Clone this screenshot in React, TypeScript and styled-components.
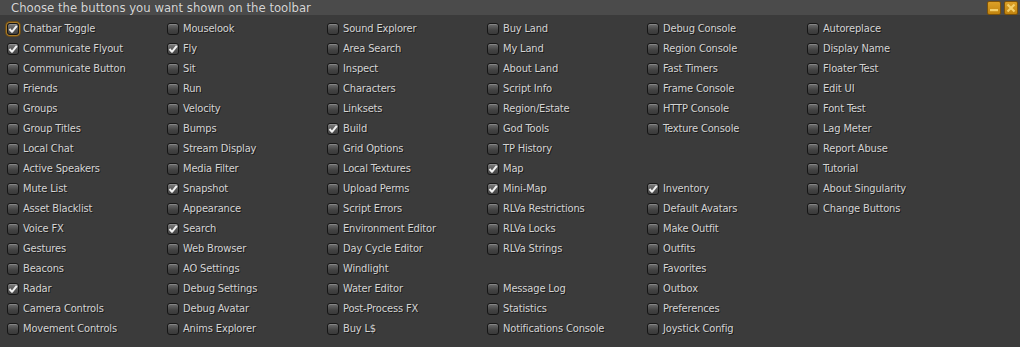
import React from "react";
import styled, { createGlobalStyle, css } from "styled-components";

const Global = createGlobalStyle`
  html, body { margin: 0; padding: 0; background: #3b3b3b; }
  body { width: 1020px; height: 347px; overflow: hidden; }
`;

const Floater = styled.div`
  width: 1020px;
  height: 347px;
  background: #3b3b3b;
  display: flex;
  flex-direction: column;
  font-family: "DejaVu Sans Condensed", "DejaVu Sans", sans-serif;
`;

const TitleBar = styled.div`
  height: 15px;
  background: #4b4b4b;
  display: flex;
  align-items: center;
  justify-content: space-between;
  padding: 0 2px 0 11px;
`;

const Title = styled.div`
  color: #d6d6d6;
  font-size: 13px;
  line-height: 16px;
  text-shadow: 0 0 1px rgba(0, 0, 0, 0.3);
`;

const TitleButtons = styled.div`
  display: flex;
  gap: 3px;
  align-self: flex-start;
  padding-top: 1px;
`;

const TitleButton = styled.div`
  width: 14px;
  height: 14px;
  box-sizing: border-box;
  border: 1px solid #7e5208;
  border-radius: 2px;
  background: linear-gradient(#dca027, #c1840f);
  display: flex;
  align-items: center;
  justify-content: center;
`;

const Grid = styled.div`
  display: grid;
  grid-template-columns: repeat(6, 160px);
  grid-template-rows: repeat(16, 20px);
  grid-auto-flow: column;
  padding: 4px 0 0 7px;
`;

const Item = styled.div`
  display: flex;
  align-items: center;
  gap: 4px;
  height: 20px;
`;

const Box = styled.div<{ $checked: boolean; $focus: boolean }>`
  flex: none;
  width: 12px;
  height: 12px;
  box-sizing: border-box;
  border: 1px solid #161616;
  border-radius: 3px;
  background: linear-gradient(#6e6e6e, #444444 60%, #3a3a3a);
  box-shadow: inset 0 1px 0 rgba(255, 255, 255, 0.18);
  display: flex;
  align-items: center;
  justify-content: center;
  ${(p) =>
    p.$checked &&
    css`
      background: linear-gradient(#7c7c7c, #525252 60%, #444444);
    `}
  ${(p) =>
    p.$focus &&
    css`
      box-shadow: inset 0 1px 0 rgba(255, 255, 255, 0.18), 0 0 0 1px #a87a28,
        0 0 0 2px #6a4c18;
    `}
`;

const Label = styled.span`
  color: #d4d4d4;
  font-size: 11px;
  line-height: 14px;
  letter-spacing: -0.15px;
  white-space: nowrap;
  text-shadow: 1px 1px 0 #1c1c1c;
`;

const Check = () => (
  <svg width="10" height="10" viewBox="0 0 10 10">
    <path d="M1.5 5 L4 7.8 L8.8 1.8" fill="none" stroke="#f2f2f2" strokeWidth="2" strokeLinejoin="round" />
  </svg>
);

type Entry = [string, boolean] | null;

const columns: Entry[][] = [
  [
    ["Chatbar Toggle", true],
    ["Communicate Flyout", true],
    ["Communicate Button", false],
    ["Friends", false],
    ["Groups", false],
    ["Group Titles", false],
    ["Local Chat", false],
    ["Active Speakers", false],
    ["Mute List", false],
    ["Asset Blacklist", false],
    ["Voice FX", false],
    ["Gestures", false],
    ["Beacons", false],
    ["Radar", true],
    ["Camera Controls", false],
    ["Movement Controls", false],
  ],
  [
    ["Mouselook", false],
    ["Fly", true],
    ["Sit", false],
    ["Run", false],
    ["Velocity", false],
    ["Bumps", false],
    ["Stream Display", false],
    ["Media Filter", false],
    ["Snapshot", true],
    ["Appearance", false],
    ["Search", true],
    ["Web Browser", false],
    ["AO Settings", false],
    ["Debug Settings", false],
    ["Debug Avatar", false],
    ["Anims Explorer", false],
  ],
  [
    ["Sound Explorer", false],
    ["Area Search", false],
    ["Inspect", false],
    ["Characters", false],
    ["Linksets", false],
    ["Build", true],
    ["Grid Options", false],
    ["Local Textures", false],
    ["Upload Perms", false],
    ["Script Errors", false],
    ["Environment Editor", false],
    ["Day Cycle Editor", false],
    ["Windlight", false],
    ["Water Editor", false],
    ["Post-Process FX", false],
    ["Buy L$", false],
  ],
  [
    ["Buy Land", false],
    ["My Land", false],
    ["About Land", false],
    ["Script Info", false],
    ["Region/Estate", false],
    ["God Tools", false],
    ["TP History", false],
    ["Map", true],
    ["Mini-Map", true],
    ["RLVa Restrictions", false],
    ["RLVa Locks", false],
    ["RLVa Strings", false],
    null,
    ["Message Log", false],
    ["Statistics", false],
    ["Notifications Console", false],
  ],
  [
    ["Debug Console", false],
    ["Region Console", false],
    ["Fast Timers", false],
    ["Frame Console", false],
    ["HTTP Console", false],
    ["Texture Console", false],
    null,
    null,
    ["Inventory", true],
    ["Default Avatars", false],
    ["Make Outfit", false],
    ["Outfits", false],
    ["Favorites", false],
    ["Outbox", false],
    ["Preferences", false],
    ["Joystick Config", false],
  ],
  [
    ["Autoreplace", false],
    ["Display Name", false],
    ["Floater Test", false],
    ["Edit UI", false],
    ["Font Test", false],
    ["Lag Meter", false],
    ["Report Abuse", false],
    ["Tutorial", false],
    ["About Singularity", false],
    ["Change Buttons", false],
    null,
    null,
    null,
    null,
    null,
    null,
  ],
];

export default function App() {
  return (
    <>
      <Global />
      <Floater>
        <TitleBar>
          <Title>Choose the buttons you want shown on the toolbar</Title>
          <TitleButtons>
            <TitleButton>
              <svg width="10" height="10" viewBox="0 0 10 10">
                <rect x="1" y="6" width="8" height="2.2" fill="#f4cf6a" />
              </svg>
            </TitleButton>
            <TitleButton>
              <svg width="10" height="10" viewBox="0 0 10 10">
                <path d="M1.5 1.5 L8.5 8.5 M8.5 1.5 L1.5 8.5" stroke="#f4cf6a" strokeWidth="2.2" />
              </svg>
            </TitleButton>
          </TitleButtons>
        </TitleBar>
        <Grid>
          {columns.flatMap((col, ci) =>
            col.map((e, ri) =>
              e ? (
                <Item key={`${ci}-${ri}`}>
                  <Box $checked={e[1]} $focus={ci === 0 && ri === 0}>
                    {e[1] && <Check />}
                  </Box>
                  <Label>{e[0]}</Label>
                </Item>
              ) : (
                <div key={`${ci}-${ri}`} />
              )
            )
          )}
        </Grid>
      </Floater>
    </>
  );
}
